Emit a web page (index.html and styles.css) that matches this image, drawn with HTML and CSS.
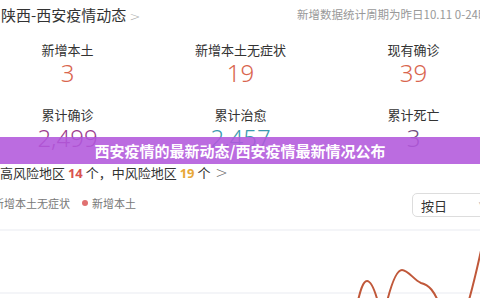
FILE: index.html
```html
<!DOCTYPE html>
<html lang="zh-CN">
<head>
  <meta charset="UTF-8">
  <meta name="viewport" content="width=device-width, initial-scale=1.0">
  <title>陕西-西安疫情动态</title>
  <link rel="stylesheet" href="styles.css">
</head>
<body>
  <div class="page">
    <!-- Header -->
    <div class="head">
      <div class="title">陕西-西安疫情动态 <span class="chev">&gt;</span></div>
      <div class="note">新增数据统计周期为昨日10.11 0-24时</div>
    </div>

    <!-- Stats -->
    <div class="stats">
      <div class="stat"><div class="label">新增本土</div><div class="num red">3</div></div>
      <div class="stat"><div class="label">新增本土无症状</div><div class="num red">19</div></div>
      <div class="stat"><div class="label">现有确诊</div><div class="num red">39</div></div>
      <div class="stat"><div class="label">累计确诊</div><div class="num plum">2,499</div></div>
      <div class="stat"><div class="label">累计治愈</div><div class="num teal">2,457</div></div>
      <div class="stat"><div class="label">累计死亡</div><div class="num dark">3</div></div>
    </div>

    <div class="risk">高风险地区 <b class="hi">14</b> 个，中风险地区 <b class="mid">19</b> 个 <span class="chev big">&gt;</span></div>

    <!-- Chart toolbar -->
    <div class="toolbar">
      <div class="legend">
        <span class="item"><i class="dot grey"></i>新增本土无症状</span>
        <span class="item"><i class="dot pink"></i>新增本土</span>
      </div>
      <div class="select">按日<span class="arrow">∨</span></div>
    </div>

    <svg class="chart" width="480" height="80" viewBox="0 0 480 80">
      <line x1="0" y1="12" x2="480" y2="12" stroke="#f4f5f8" stroke-width="2"/>
      <line x1="0" y1="75" x2="480" y2="75" stroke="#f4f5f8" stroke-width="2"/>
      <path d="M356 92 C360 72, 363 63, 367 63 C371 63, 375 72, 379 88
               M385 92 C390 70, 396 52, 402 52 C408 52, 414 62, 421 65 C429 67, 434 72, 441 90
               M466 92 C471 76, 476 56, 482 28"
            fill="none" stroke="#c0583a" stroke-width="2"/>
    </svg>

    <!-- Overlay banner -->
    <div class="banner">西安疫情的最新动态/西安疫情最新情况公布</div>
  </div>
</body>
</html>
```

FILE: styles.css
```css
body {
  margin: 0;
  background: #fff;
  font-family: "Noto Sans CJK SC", "Noto Sans", sans-serif;
  color: #333;
  overflow: hidden;
}
.page {
  position: relative;
  width: 480px;
  height: 300px;
  overflow: hidden;
}
.head {
  display: flex;
  align-items: center;
  height: 28px;
  padding-left: 1px;
}
.title {
  flex: 0 0 296px;
  font-size: 15px;
  white-space: nowrap;
}
.chev {
  color: #aaa;
  font-size: 13px;
  font-family: "DejaVu Sans", sans-serif;
  font-weight: 200;
}
.chev.big {
  color: #666;
  font-size: 15px;
  margin-left: 2px;
}
.note {
  flex: none;
  font-size: 11.5px;
  color: #999;
  white-space: nowrap;
}
.stats {
  display: grid;
  grid-template-columns: repeat(3, 173px);
  margin-left: -19px;
  margin-top: 13px;
  row-gap: 19px;
}
.stat {
  text-align: center;
}
.label {
  font-size: 13px;
  line-height: 18px;
}
.num {
  font-size: 24px;
  line-height: 28px;
  font-family: "Noto Sans", sans-serif;
  font-weight: 300;
}
.red { color: #d9654e; }
.plum { color: #9c3c8e; }
.teal { color: #3a9bb0; }
.dark { color: #6c4b7c; }
.risk {
  margin-top: 11px;
  font-size: 13px;
  line-height: 20px;
  white-space: nowrap;
}
.risk b {
  font-family: "Noto Sans", sans-serif;
}
.hi { color: #d9534f; }
.mid { color: #e8a838; }
.toolbar {
  display: flex;
  justify-content: space-between;
  align-items: center;
  margin-top: 9px;
  height: 26px;
}
.legend {
  display: flex;
  gap: 12px;
  margin-left: -17px;
  font-size: 11px;
  color: #777;
  margin-top: -4px;
}
.item {
  display: flex;
  align-items: center;
  gap: 4px;
}
.dot {
  width: 6px;
  height: 6px;
  border-radius: 50%;
}
.grey { background: #bbb; }
.pink { background: #e07070; }
.select {
  width: 80px;
  height: 24px;
  border: 1px solid #ddd;
  border-radius: 5px;
  margin-right: -12px;
  box-sizing: border-box;
  display: flex;
  align-items: center;
  justify-content: space-between;
  padding: 0 4px 0 8px;
  font-size: 13px;
}
.arrow {
  color: #999;
  font-size: 9px;
}
.chart {
  display: block;
}
.banner {
  position: absolute;
  left: 0;
  right: 0;
  top: 137px;
  height: 27px;
  background: rgba(178, 88, 220, 0.88);
  color: #fff;
  font-size: 15px;
  font-weight: bold;
  line-height: 27px;
  text-align: center;
  white-space: nowrap;
}
```
